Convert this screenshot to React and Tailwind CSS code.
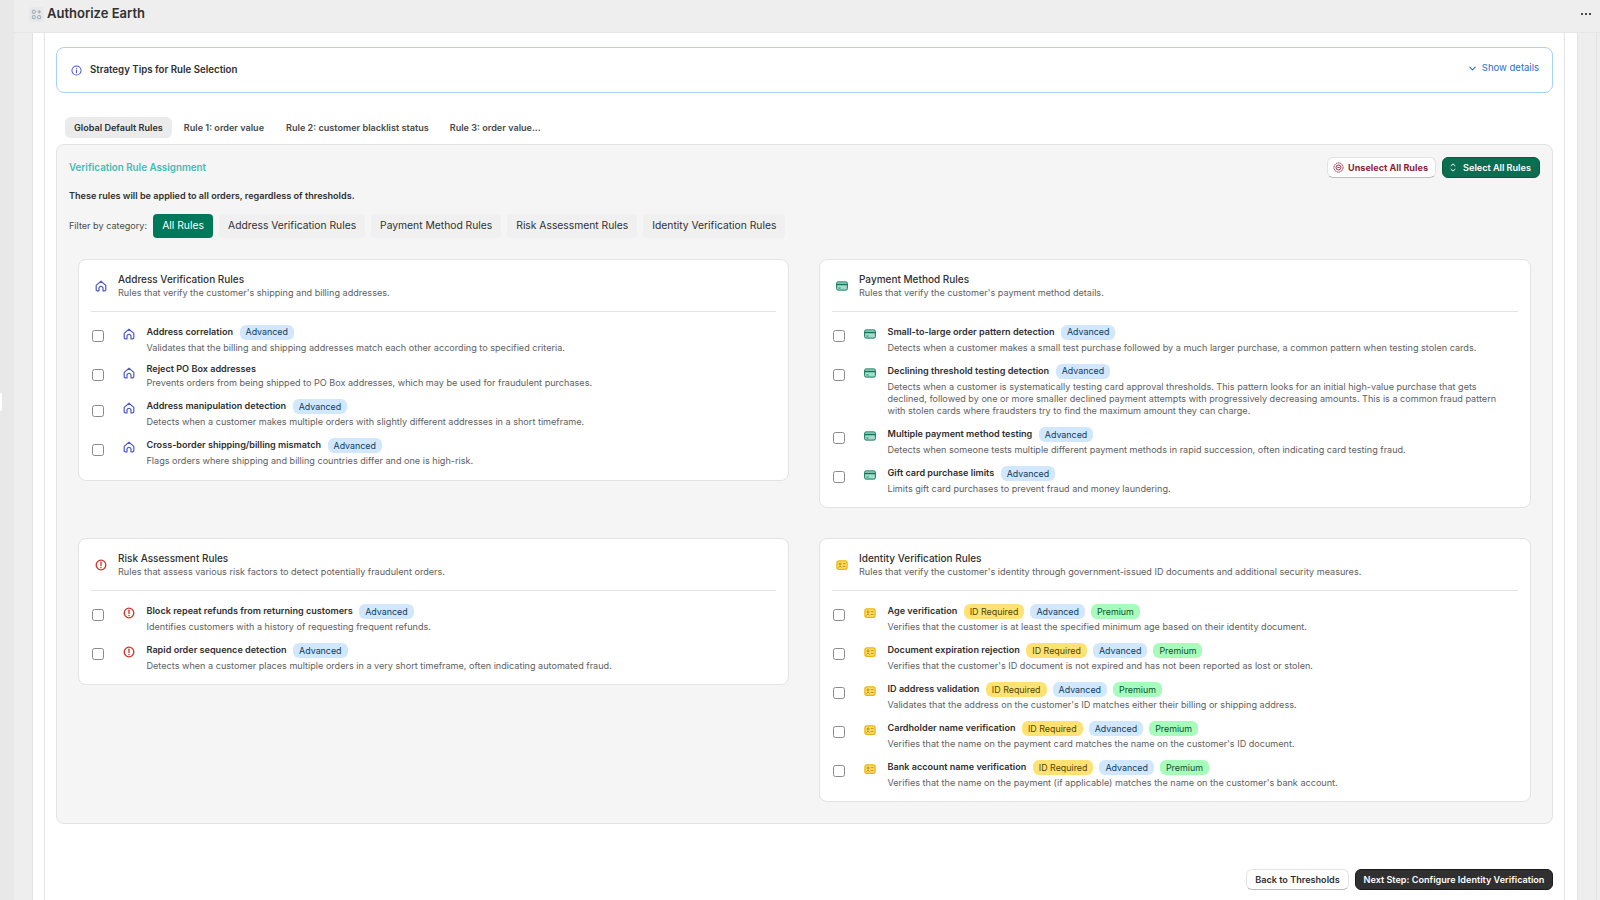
import React from "react";

const Home = ({ className = "" }) => (
  <svg viewBox="0 0 12 12" className={className} fill="none" stroke="#4f5ac7" strokeWidth="1.2" strokeLinejoin="round" strokeLinecap="round">
    <path d="M1.2 5.4 6 1.2l4.8 4.2v4.4c0 .7-.4 1.1-1.1 1.1H8V8.3a2 2 0 0 0-4 0v2.6H2.3c-.7 0-1.1-.4-1.1-1.1V5.4Z" />
  </svg>
);
const Card = ({ className = "" }) => (
  <svg viewBox="0 0 12 12" className={className} fill="none">
    <rect x=".6" y="1.9" width="10.8" height="8.2" rx="1.5" fill="#a3dccb" />
    <path d="M.6 4.5h10.8" stroke="#0f7a5a" strokeWidth="1.5" />
    <rect x=".6" y="1.9" width="10.8" height="8.2" rx="1.5" stroke="#0f7a5a" strokeWidth="1" />
    <path d="M2.4 8h2.2" stroke="#0f7a5a" strokeWidth=".9" />
  </svg>
);
const Id = ({ className = "" }) => (
  <svg viewBox="0 0 12 12" className={className} fill="none">
    <rect x=".9" y="1.9" width="10.2" height="8.4" rx="2" fill="#ffe066" stroke="#efb008" strokeWidth="1.2" />
    <circle cx="4.1" cy="5" r="1.05" stroke="#ad8200" strokeWidth=".85" />
    <path d="M2.6 8.2c.3-1.1 2.6-1.1 3 0M7.2 4.7h2M7 7.4h2.2" stroke="#ad8200" strokeWidth=".85" strokeLinecap="round" />
  </svg>
);
const Alert = ({ className = "" }) => (
  <svg viewBox="0 0 12 12" className={className} fill="none">
    <circle cx="6" cy="6" r="4.8" stroke="#d92d20" strokeWidth="1.3" />
    <path d="M6 3.2v3.2" stroke="#d92d20" strokeWidth="1.3" strokeLinecap="round" />
    <circle cx="6" cy="8.4" r=".75" fill="#d92d20" />
  </svg>
);

const Badge = ({ t }) => {
  const c = t === "A" ? "bg-[#d1e7fd] text-[#0d3c61]" : t === "I" ? "bg-[#ffe273] text-[#4f4700]" : "bg-[#a8fcbb] text-[#0c5132]";
  const label = t === "A" ? "Advanced" : t === "I" ? "ID Required" : "Premium";
  return <span className={`h-[15px] px-[6px] rounded-[6px] flex items-center text-[8.9px] ${c}`}>{label}</span>;
};

const Rule = ({ Icon, title, desc, tags = ["A"], hasBadge, long, last }) => (
  <div className={`flex pl-[0.5px] ${last ? "" : "mb-[9.5px]"}`}>
    <div className="w-[31px] shrink-0 pt-[5.5px] pl-[0.5px]">
      <span className="block w-[12px] h-[12px] rounded-[2.5px] border border-[#8a8a8a] bg-white" />
    </div>
    <div className="w-[24px] shrink-0 pt-[3px]">
      <Icon className="w-[12px] h-[12px]" />
    </div>
    <div className="flex-1">
      <div className="flex items-center gap-[6px]">
        <span className={`font-semibold text-[#303030] mr-[0.5px] ${hasBadge ? "leading-[12.5px]" : "leading-[10.5px]"}`}>{title}</span>
        {hasBadge && tags.map((t) => <Badge key={t} t={t} />)}
      </div>
      <p className={`pr-[16px] text-[#616161] ${hasBadge ? "mt-[2px]" : "mt-[3px]"} ${long ? "leading-[12.3px]" : "leading-[12.5px]"}`}>{desc}</p>
    </div>
  </div>
);

const Section = ({ Icon, title, desc, rules, tags }) => (
  <section className="bg-white border border-[#e3e3e3] rounded-[8px] px-[12px] pt-[12.5px] pb-[12px] self-start">
    <div className="flex items-center pl-[4px]">
      <Icon className="w-[12px] h-[12px] shrink-0 mr-[11px]" />
      <div>
        <div className="text-[10px] font-medium text-[#303030] leading-[13.5px]">{title}</div>
        <div className="text-[#616161] leading-[13.5px]">{desc}</div>
      </div>
    </div>
    <hr className="border-[#e3e3e3] mt-[11px] mb-[13px]" />
    {rules.map((r, i) => (
      <Rule key={r[0]} Icon={Icon} title={r[0]} desc={r[1]} tags={tags} hasBadge={r[2] !== false} long={r[1].length > 200} last={i === rules.length - 1} />
    ))}
  </section>
);

const address = [
  ["Address correlation", "Validates that the billing and shipping addresses match each other according to specified criteria."],
  ["Reject PO Box addresses", "Prevents orders from being shipped to PO Box addresses, which may be used for fraudulent purchases.", false],
  ["Address manipulation detection", "Detects when a customer makes multiple orders with slightly different addresses in a short timeframe."],
  ["Cross-border shipping/billing mismatch", "Flags orders where shipping and billing countries differ and one is high-risk."],
];
const payment = [
  ["Small-to-large order pattern detection", "Detects when a customer makes a small test purchase followed by a much larger purchase, a common pattern when testing stolen cards."],
  ["Declining threshold testing detection", "Detects when a customer is systematically testing card approval thresholds. This pattern looks for an initial high-value purchase that gets declined, followed by one or more smaller declined payment attempts with progressively decreasing amounts. This is a common fraud pattern with stolen cards where fraudsters try to find the maximum amount they can charge."],
  ["Multiple payment method testing", "Detects when someone tests multiple different payment methods in rapid succession, often indicating card testing fraud."],
  ["Gift card purchase limits", "Limits gift card purchases to prevent fraud and money laundering."],
];
const risk = [
  ["Block repeat refunds from returning customers", "Identifies customers with a history of requesting frequent refunds."],
  ["Rapid order sequence detection", "Detects when a customer places multiple orders in a very short timeframe, often indicating automated fraud."],
];
const identity = [
  ["Age verification", "Verifies that the customer is at least the specified minimum age based on their identity document."],
  ["Document expiration rejection", "Verifies that the customer's ID document is not expired and has not been reported as lost or stolen."],
  ["ID address validation", "Validates that the address on the customer's ID matches either their billing or shipping address."],
  ["Cardholder name verification", "Verifies that the name on the payment card matches the name on the customer's ID document."],
  ["Bank account name verification", "Verifies that the name on the payment (if applicable) matches the name on the customer's bank account."],
];

export default function App() {
  return (
    <div className="flex w-full h-[900px] overflow-hidden bg-[#e8e8e8] text-[9.1px] text-[#303030] font-['Inter',sans-serif]">
      <aside className="relative w-[14px] shrink-0">
        <span className="absolute left-0 top-[393px] w-[2px] h-[18px] bg-white rounded-r-[2px]" />
      </aside>
      <div className="flex-1 min-w-0 flex flex-col bg-[#eeeeee]">
        <header className="h-[33px] shrink-0 flex items-center pl-[15px] pr-[9px] pb-[4px] border-b border-[#e6e6e6]">
          <span className="w-[15px] h-[15px] rounded-[3px] bg-[#e6e8eb] flex items-center justify-center mr-[3px]">
            <svg viewBox="0 0 12 12" className="w-[11px] h-[11px]" fill="none" stroke="#9aa3ad" strokeWidth="1">
              <rect x="1.5" y="1.5" width="3.2" height="3.2" rx=".5" />
              <rect x="1.5" y="7.3" width="3.2" height="3.2" rx=".5" />
              <rect x="7.3" y="7.3" width="3.2" height="3.2" rx=".5" />
              <path d="M8.9 1.2v3.8M7 3.1h3.8" />
            </svg>
          </span>
          <h1 className="text-[13px] font-semibold text-[#303030]">Authorize Earth</h1>
          <span className="ml-auto flex gap-[2px]">
            <i className="w-[2px] h-[2px] bg-[#4a4a4a]" />
            <i className="w-[2px] h-[2px] bg-[#4a4a4a]" />
            <i className="w-[2px] h-[2px] bg-[#4a4a4a]" />
          </span>
        </header>
        <div className="flex-1 min-h-0 flex pl-[18px] pr-[3px]">
          <div className="flex-1 min-w-0 flex pr-[18px] border-r border-[#e3e3e3]">
            <div className="flex-1 min-w-0 bg-white border-x border-[#e3e3e3] pl-[11px] pr-[12px]">
              <div className="h-full bg-white border-x border-[#e3e3e3] px-[11px] pt-[14px]">
                <div className="h-[46px] border border-[#a5d3fb] rounded-[8px] flex items-center pl-[14px] pr-[13px] bg-white">
                  <svg viewBox="0 0 12 12" className="w-[11px] h-[11px] mr-[8px]" fill="none">
                    <circle cx="6" cy="6" r="5" stroke="#4f5ac7" strokeWidth="1.1" />
                    <path d="M6 5.5v3" stroke="#4f5ac7" strokeWidth="1.2" strokeLinecap="round" />
                    <circle cx="6" cy="3.6" r=".7" fill="#4f5ac7" />
                  </svg>
                  <span className="text-[9.7px] font-semibold">Strategy Tips for Rule Selection</span>
                  <span className="ml-auto flex items-center gap-[5px] text-[9.5px] text-[#2c6ecb] mb-[4px]">
                    <svg viewBox="0 0 10 10" className="w-[9px] h-[9px]" fill="none" stroke="#2c6ecb" strokeWidth="1.2" strokeLinecap="round" strokeLinejoin="round">
                      <path d="M2 3.5 5 6.5l3-3" />
                    </svg>
                    Show details
                  </span>
                </div>

                <nav className="flex gap-[2px] pl-[9px] mt-[24px] mb-[6px] font-semibold">
                  <span className="h-[21px] px-[9px] flex items-center bg-[#ebebeb] rounded-[6px]">Global Default Rules</span>
                  <span className="h-[21px] px-[10px] flex items-center text-[#4a4a4a]">Rule 1: order value</span>
                  <span className="h-[21px] px-[10px] flex items-center text-[#4a4a4a]">Rule 2: customer blacklist status</span>
                  <span className="h-[21px] pl-[9px] pr-[10px] flex items-center text-[#4a4a4a]">Rule 3: order value...</span>
                </nav>

                <div className="h-[680px] bg-[#f5f5f5] border border-[#e3e3e3] rounded-[8px]">
                  <div className="flex items-start pl-[12px] pr-[12px] pt-[12px]">
                    <h2 className="mt-[4px] text-[9.8px] font-semibold text-[#41bdb5]">Verification Rule Assignment</h2>
                    <div className="ml-auto flex gap-[6px]">
                      <button className="h-[21px] w-[109px] pr-[2px] rounded-[6px] bg-white border border-[#e3e3e3] border-b-[#bdbdbd] flex items-center justify-center gap-[4px] font-bold text-[#8e1f35]">
                        <svg viewBox="0 0 12 12" className="w-[11px] h-[11px]" fill="none" stroke="#8e1f35">
                          <circle cx="6" cy="6" r="5" strokeWidth="1" strokeDasharray="1.5 .5" />
                          <circle cx="6" cy="6" r="2.7" strokeWidth="1" />
                          <path d="M4.8 6h2.4" strokeWidth="1" />
                        </svg>
                        Unselect All Rules
                      </button>
                      <button className="h-[21px] w-[98px] pr-[2px] rounded-[6px] bg-[#0b6e50] border border-[#085a41] flex items-center justify-center gap-[6px] font-semibold text-white">
                        <svg viewBox="0 0 10 12" className="w-[8px] h-[11px]" fill="none" stroke="#fff" strokeWidth="1.2" strokeLinecap="round" strokeLinejoin="round">
                          <path d="M2.5 3.8 5 1.5l2.5 2.3M2.5 8.2 5 10.5l2.5-2.3" />
                        </svg>
                        Select All Rules
                      </button>
                    </div>
                  </div>
                  <p className="pl-[12px] mt-[11px] font-semibold leading-[13px]">These rules will be applied to all orders, regardless of thresholds.</p>
                  <div className="flex items-center pl-[12px] mt-[11.5px] h-[24px] gap-[6px]">
                    <span className="text-[#4a4a4a]">Filter by category:</span>
                    <span className="h-[24px] w-[60px] rounded-[4px] bg-[#00785a] text-white text-[10.3px] flex items-center justify-center">All Rules</span>
                    {["Address Verification Rules", "Payment Method Rules", "Risk Assessment Rules", "Identity Verification Rules"].map((f) => (
                      <span key={f} className="h-[24px] px-[9px] rounded-[4px] bg-[#f0f0f0] text-[10.3px] flex items-center">{f}</span>
                    ))}
                  </div>
                  <div className="grid grid-cols-[711px_1fr] gap-x-[30px] gap-y-[30px] px-[21px] mt-[21.5px]">
                    <Section Icon={Home} title="Address Verification Rules" desc="Rules that verify the customer's shipping and billing addresses." rules={address} tags={["A"]} />
                    <Section Icon={Card} title="Payment Method Rules" desc="Rules that verify the customer's payment method details." rules={payment} tags={["A"]} />
                    <Section Icon={Alert} title="Risk Assessment Rules" desc="Rules that assess various risk factors to detect potentially fraudulent orders." rules={risk} tags={["A"]} />
                    <Section Icon={Id} title="Identity Verification Rules" desc="Rules that verify the customer's identity through government-issued ID documents and additional security measures." rules={identity} tags={["I", "A", "P"]} />
                  </div>
                </div>

                <div className="flex justify-end gap-[6px] mt-[45px] font-semibold">
                  <button className="h-[21px] w-[103px] rounded-[6px] bg-white border border-[#e3e3e3] border-b-[#bdbdbd]">Back to Thresholds</button>
                  <button className="h-[21px] w-[198px] rounded-[6px] bg-[#303030] border border-[#1a1a1a] text-white">Next Step: Configure Identity Verification</button>
                </div>
              </div>
            </div>
          </div>
        </div>
      </div>
    </div>
  );
}
